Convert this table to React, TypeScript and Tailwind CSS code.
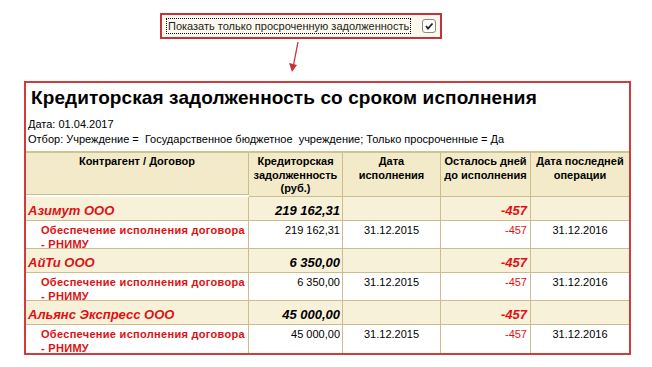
import React from 'react'

const groups = [
  { name: 'Азимут ООО', sum: '219 162,31' },
  { name: 'АйТи ООО', sum: '6 350,00' },
  { name: 'Альянс Экспресс ООО', sum: '45 000,00' },
]

const cell = 'border-r border-b border-[#cdbd8c]'
const head = 'border-r border-b border-[#cdbd8c] bg-[#f3eac9] text-[11px] font-bold text-center leading-[13.5px] pt-[2px]'

export default function App() {
  return (
    <div className="w-[652px] h-[367px] bg-white text-black" style={{ fontFamily: '"Liberation Sans", Arial, sans-serif' }}>
      <div className="pt-[13px] pl-[160px]">
        <div className="w-[282px] h-[26px] border-2 border-[#c0353a] bg-[#fbf9ee] flex items-center pl-[4px]">
          <span className="border border-dotted border-black text-[11px] leading-[14px] px-[1px] text-[#222]">Показать только просроченную задолженность</span>
          <div className="ml-auto mr-[4px] w-[14px] h-[14px] rounded-[3px] border border-[#8c8a80] bg-white flex items-center justify-center">
            <svg width="10" height="10" viewBox="0 0 10 10">
              <path d="M2 5 L4 7.5 L8.5 2.5" stroke="#222" strokeWidth="1.8" fill="none" />
            </svg>
          </div>
        </div>
      </div>
      <svg width="20" height="34" viewBox="0 0 20 34" className="ml-[285px] mt-[2px] block">
        <path d="M13 1 L8.5 24" stroke="#c0353a" strokeWidth="1.3" fill="none" />
        <path d="M4 22 L12 24 L7 31 Z" fill="#c0353a" />
      </svg>
      <div className="ml-[24px] mt-[6px] w-[607px] border-2 border-[#d33a3a] bg-white">
        <div className="pl-[5px] pt-[3px] text-[19px] font-bold leading-[24px] tracking-[0.1px]">Кредиторская задолженность со сроком исполнения</div>
        <div className="pl-[2px] pt-[7px] text-[11px] leading-[15px]">Дата: 01.04.2017</div>
        <div className="pl-[2px] text-[11px] leading-[15px]">Отбор: Учреждение =&nbsp; Государственное бюджетное&nbsp; учреждение; Только просроченные = Да</div>
        <div className="mt-[4px] grid grid-cols-[223px_94px_98px_90px_98px] border-t-2 border-[#d2c38e]">
          <div className={`${head} h-[42px]`}>Контрагент / Договор</div>
          <div className={head}>Кредиторская задолженность (руб.)</div>
          <div className={head}>Дата<br />исполнения</div>
          <div className={head}>Осталось дней до исполнения</div>
          <div className={`${head} border-r-0`}>Дата последней операции</div>
          {groups.map((g, i) => (
            <React.Fragment key={g.name}>
              <div className={`${cell} bg-[#f8f1da] h-[24px] pl-[2px] pt-[6px] text-[13px] leading-[16px] font-bold italic text-[#e01010]`}>{g.name}</div>
              <div className={`${cell} bg-[#f8f1da] pr-[2px] pt-[6px] text-right text-[13px] leading-[16px] font-bold italic`}>{g.sum}</div>
              <div className={`${cell} bg-[#f8f1da]`}></div>
              <div className={`${cell} bg-[#f8f1da] pr-[3px] pt-[6px] text-right text-[13px] leading-[16px] font-bold italic text-[#e01010]`}>-457</div>
              <div className={`${cell} bg-[#f8f1da] border-r-0`}></div>
              <div className={`${cell} ${i === 2 ? 'border-b-0' : ''} h-[28px] pl-[15px] pt-[2px] text-[11px] leading-[14px] font-bold text-[#e01010] tracking-[0.3px]`}>Обеспечение исполнения договора - РНИМУ</div>
              <div className={`${cell} ${i === 2 ? 'border-b-0' : ''} pr-[2px] pt-[2px] text-right text-[11px] leading-[14px]`}>{g.sum}</div>
              <div className={`${cell} ${i === 2 ? 'border-b-0' : ''} pt-[2px] text-center text-[11px] leading-[14px]`}>31.12.2015</div>
              <div className={`${cell} ${i === 2 ? 'border-b-0' : ''} pr-[3px] pt-[2px] text-right text-[11px] leading-[14px] text-[#e01010]`}>-457</div>
              <div className={`${cell} ${i === 2 ? 'border-b-0' : ''} border-r-0 pt-[2px] text-center text-[11px] leading-[14px]`}>31.12.2016</div>
            </React.Fragment>
          ))}
        </div>
      </div>
    </div>
  )
}
